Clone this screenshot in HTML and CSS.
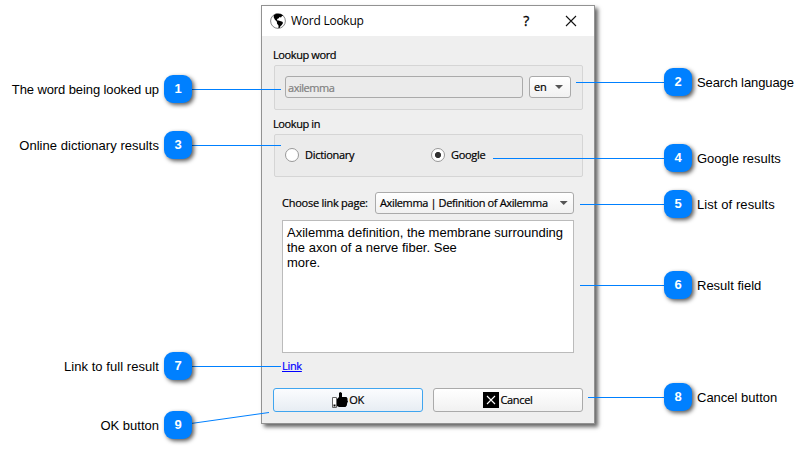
FILE: index.html
```html
<!DOCTYPE html>
<html lang="en">
<head>
<meta charset="utf-8">
<title>Word Lookup</title>
<link rel="stylesheet" href="styles.css">
</head>
<body>
<main class="stage">
  <section class="dialog">
    <header class="titlebar">
      <svg class="globe" width="16" height="16" viewBox="0 0 16 16"><circle cx="8" cy="8" r="7.4" fill="#fff" stroke="#777" stroke-width=".9"/><path d="M3.8 2.2 6 .8 10.8.9 13.5 2.8 12 3 11 4.5 9.5 4 8.800 5.3 7.5 5.8 6.8 7.2 8.5 7.4 12.4 8.8 13 10 11.8 12 10.4 13.3 9.6 15 8.4 15 8.6 12.8 7 10.6 6.9 8.7 4.8 6.5 3.7 4.3Z" fill="#000"/></svg>
      <h1 class="title">Word Lookup</h1>
      <span class="help">?</span>
      <svg class="close" width="12" height="12" viewBox="0 0 12 12"><path d="M1 1 11 11M11 1 1 11" stroke="#111" stroke-width="1.1"/></svg>
    </header>
    <div class="body">
      <div class="label"><span>Lookup word</span></div>
      <div class="group group-word">
        <div class="input">axilemma</div>
        <div class="combo combo-lang"><span>en</span><i class="arrow"></i></div>
      </div>
      <div class="label label-in"><span>Lookup in</span></div>
      <div class="group group-in">
        <div class="option"><i class="radio"></i><span>Dictionary</span></div>
        <div class="option"><i class="radio on"></i><span>Google</span></div>
      </div>
      <div class="page-row">
        <span class="choose">Choose link page:</span>
        <div class="combo combo-page"><span class="value">Axilemma | Definition of Axilemma</span><i class="sliver"></i><i class="arrow"></i></div>
      </div>
      <div class="result">Axilemma definition, the membrane surrounding<br>the axon of a nerve fiber. See<br>more.</div>
      <div class="link-row"><a class="link">Link</a></div>
      <footer class="buttons">
        <div class="button primary">
          <svg width="16" height="16" viewBox="0 0 16 16"><path d="M.5 5.5h4v10h-4z" fill="#fff" stroke="#666"/><path d="M1.500 12.500h2v2h-2z" fill="#000"/><path d="M5 7 7 5V1L8.200 0 10 1V5H14.500L15.500 6.500V8.500L16 9.500 15.200 11 14.800 13.500 13.500 15H7L5 14Z" fill="#000"/></svg><span>OK</span>
        </div>
        <div class="button">
          <svg width="16" height="16" viewBox="0 0 16 16"><path d="M0 0h16v16H0z" fill="#000"/><path d="M4 4 12 12M12 4 4 12" stroke="#fff" stroke-width="1.100"/></svg><span>Cancel</span>
        </div>
      </footer>
    </div>
  </section>
  <svg class="leaders" width="810" height="450" viewBox="0 0 810 450"><path d="M190 89.500H281M190 145.500H281M190 366.500H281M576 82.500H666M493 158.500H666M580 204.500H666M580 285.500H666M588 397.500H666M191 423.500 269 412.500"/></svg>
  <div class="callout left c1"><span>The word being looked up</span><b>1</b></div>
  <div class="callout left c3"><span>Online dictionary results</span><b>3</b></div>
  <div class="callout left c7"><span>Link to full result</span><b>7</b></div>
  <div class="callout left c9"><span>OK button</span><b>9</b></div>
  <div class="callout right c2"><b>2</b><span>Search language</span></div>
  <div class="callout right c4"><b>4</b><span>Google results</span></div>
  <div class="callout right c5"><b>5</b><span>List of results</span></div>
  <div class="callout right c6"><b>6</b><span>Result field</span></div>
  <div class="callout right c8"><b>8</b><span>Cancel button</span></div>
</main>
</body>
</html>
```
FILE: styles.css
```css
* { box-sizing: border-box; }
body { margin: 0; background: #fff; color: #000; font: 11px/14px "Open Sans", "Noto Sans", sans-serif; }
.stage { position: relative; width: 810px; height: 450px; padding: 5px 0 0 261px; overflow: hidden; }
.dialog { width: 334px; height: 419px; border: 1px solid #929292; background: #efefef; box-shadow: 3px 3px 4px rgba(0,0,0,.6); letter-spacing: -.3px; -webkit-text-stroke: .2px; }
.titlebar { display: flex; align-items: center; height: 30px; padding: 0 17px 0 8px; background: #fff; -webkit-text-stroke: 0; }
.title { margin: 0 0 0 5px; font-size: 12px; font-weight: 400; line-height: 16px; letter-spacing: -.25px; }
.help { margin-left: auto; margin-right: 36px; font-size: 14px; line-height: 18px; padding-bottom: 1px; -webkit-text-stroke: .3px; }
.close { margin-bottom: 1px; }
.body { padding: 12px 11px 0; }
.label { height: 17px; letter-spacing: -.4px; }
.group { display: flex; width: 309px; margin-left: 1px; border: 1px solid #d5d5d5; border-radius: 2px; background: #ebebeb; }
.group-word { height: 45px; padding: 10px; gap: 6px; }
.input { width: 238px; height: 22px; padding: 4px 2px; border: 1px solid #aaa; border-radius: 3px; color: #808080; letter-spacing: -.45px; }
.combo { display: flex; align-items: center; justify-content: space-between; height: 22px; padding: 0 7px 0 4px; border: 1px solid #aaa; border-radius: 3px; background: linear-gradient(#fff, #f1f1f1); }
.combo-lang { width: 42px; }
.arrow { flex: none; width: 8px; height: 4px; background: #555; clip-path: polygon(0 0, 100% 0, 50% 100%); }
.label-in { height: 24px; padding-top: 7px; }
.group-in { height: 43px; padding: 0 0 1px 10px; align-items: center; }
.option { display: flex; align-items: center; width: 146px; gap: 6px; }
.radio { width: 14px; height: 14px; border: 1px solid #999; border-radius: 50%; background: #fff; }
.radio.on { background: radial-gradient(circle, #333 0 2.700px, #fff 3.500px); }
.page-row { display: flex; align-items: center; justify-content: space-between; margin: 15px 9px 0; }
.choose { letter-spacing: -.25px; }
.combo-page { width: 199px; }
.value { white-space: nowrap; letter-spacing: -.37px; }
.sliver { width: 1px; height: 3px; margin: 3px 10px 0 2px; background: #f0b040; }
.result { height: 133px; margin: 6px 9px 0; padding: 4px; border: 1px solid #bbb; background: #fff; font: 13px/15px "Liberation Sans", Arial, sans-serif; letter-spacing: 0; -webkit-text-stroke: 0; white-space: nowrap; }
.link-row { height: 35px; padding: 6px 9px 0; }
.link { color: #00f; text-decoration: underline; }
.buttons { display: flex; gap: 10px; }
.button { display: flex; align-items: center; justify-content: center; width: 150px; height: 24px; gap: 1px; border: 1px solid #aaa; border-radius: 3px; background: linear-gradient(#fff, #f1f1f1); }
.button.primary { border-color: #40a5ef; background: linear-gradient(#fbfcfe, #e7edf3); }
.leaders { position: absolute; left: 0; top: 0; fill: none; stroke: #0080ff; }
.callout { position: absolute; display: flex; align-items: center; height: 28px; gap: 5px; font: 13px/16px "Liberation Sans", Arial, sans-serif; white-space: nowrap; }
.callout span { padding-top: 1px; }
.callout b { display: grid; place-items: center; width: 28px; height: 28px; border-radius: 9px; background: #0080ff; color: #fff; font: bold 13px/16px "Liberation Sans", Arial, sans-serif; letter-spacing: 0; box-shadow: 2px 2px 4px rgba(0,0,0,.65); }
.left { right: 618px; }
.right { left: 664px; }
.c1 { top: 75px; letter-spacing: -.1px; }
.c2 { top: 68px; letter-spacing: -.1px; }
.c3 { top: 131px; letter-spacing: .04px; }
.c4 { top: 144px; }
.c5 { top: 190px; letter-spacing: .08px; }
.c6 { top: 271px; }
.c7 { top: 352px; letter-spacing: .06px; }
.c8 { top: 383px; }
.c9 { top: 411px; }
```
